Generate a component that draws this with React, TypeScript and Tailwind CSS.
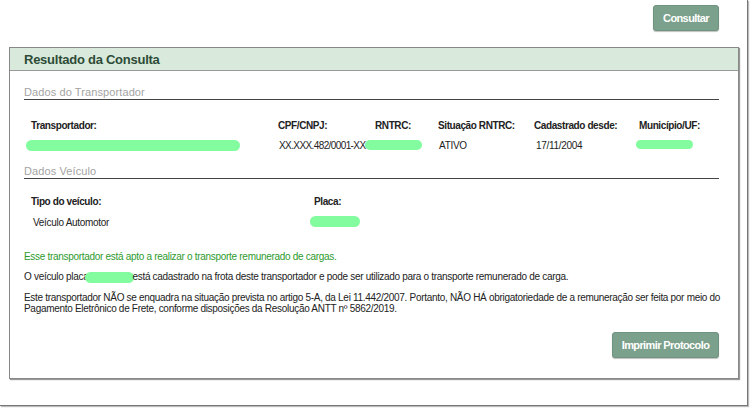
import React from 'react';

const font = { fontFamily: '"Liberation Sans", Arial, sans-serif' };

// marcador verde usado para ocultar dados
function Mark({ className }: { className: string }) {
  return <span className={`block rounded-full bg-[#82fc9e] ${className}`} />;
}

function SectionTitle({ children }: { children: React.ReactNode }) {
  return (
    <div className="border-b border-[#444] pb-[1px] text-[11px] leading-[12px] tracking-[0.1px] text-[#a3a3a3]">
      {children}
    </div>
  );
}

const btn =
  'h-[26px] rounded-[3px] border border-[#6f937f] bg-[#7ba08b] text-[11px] font-bold tracking-[-0.6px] text-white shadow-[0_1px_1px_rgba(0,0,0,0.25)]';

export default function App() {
  return (
    <div className="h-[417px] w-[750px] bg-white text-[#222]" style={font}>
      <div className="flex h-[406px] w-[748px] flex-col border-r border-b border-[#777] shadow-[1px_1px_1px_#bbb]">
        {/* barra de ação */}
        <div className="flex justify-end pt-[5px] pr-[28px]">
          <button className={`${btn} w-[66px]`}>Consultar</button>
        </div>

        {/* painel de resultado */}
        <div className="mt-[16px] ml-[9px] flex h-[332px] w-[730px] flex-col border border-[#888] shadow-[1px_1px_1px_#999]">
          <div className="flex h-[23px] items-center border-b border-[#999] bg-[#d9eadc] pt-[1px] pl-[14px] text-[13px] font-bold tracking-[-0.25px] text-[#2d4b37]">
            Resultado da Consulta
          </div>

          <div className="flex flex-1 flex-col pr-[19px] pl-[14px] text-[10px] tracking-[-0.3px]">
            <div className="mt-[15px]">
              <SectionTitle>Dados do Transportador</SectionTitle>
            </div>

            <div className="mt-[19px] flex leading-[14px] whitespace-nowrap">
              <div className="w-[254px] pl-[7px]">
                <div className="font-bold tracking-[-0.4px]">Transportador:</div>
                <Mark className="mt-[7px] -ml-[5px] h-[11px] w-[214px]" />
              </div>
              <div className="w-[97px]">
                <div className="font-bold tracking-[-0.4px]">CPF/CNPJ:</div>
                <div className="mt-[6px] pl-[1px] tracking-[-0.6px]">XX.XXX.482/0001-XX</div>
              </div>
              <div className="w-[63px]">
                <div className="font-bold tracking-[-0.4px]">RNTRC:</div>
                <Mark className="mt-[7px] -ml-[10px] h-[10px] w-[57px]" />
              </div>
              <div className="w-[96px]">
                <div className="font-bold tracking-[-0.4px]">Situação RNTRC:</div>
                <div className="mt-[6px] pl-[1px]">ATIVO</div>
              </div>
              <div className="w-[105px]">
                <div className="font-bold tracking-[-0.4px]">Cadastrado desde:</div>
                <div className="mt-[6px] pl-[2px]">17/11/2004</div>
              </div>
              <div className="flex-1">
                <div className="font-bold tracking-[-0.4px]">Município/UF:</div>
                <Mark className="mt-[7px] -ml-[3px] h-[9px] w-[57px]" />
              </div>
            </div>

            <div className="mt-[12px]">
              <SectionTitle>Dados Veículo</SectionTitle>
            </div>

            <div className="mt-[16px] flex leading-[14px]">
              <div className="w-[290px] pl-[7px]">
                <div className="font-bold tracking-[-0.4px]">Tipo do veículo:</div>
                <div className="mt-[7px] pl-[2px]">Veículo Automotor</div>
              </div>
              <div>
                <div className="font-bold tracking-[-0.4px]">Placa:</div>
                <Mark className="mt-[7px] -ml-[4px] h-[11px] w-[50px]" />
              </div>
            </div>

            <div className="mt-[21px] leading-[12px] text-[#2e9a2e]">
              Esse transportador está apto a realizar o transporte remunerado de cargas.
            </div>
            <div className="mt-[8px] flex items-center leading-[12px] whitespace-nowrap">
              <span>O veículo placa</span>
              <Mark className="-ml-[3px] h-[11px] w-[49px]" />
              <span className="-ml-[2px]">está cadastrado na frota deste transportador e pode ser utilizado para o transporte remunerado de carga.</span>
            </div>
            <p className="mt-[9px] leading-[11px] whitespace-nowrap">
              Este transportador NÃO se enquadra na situação prevista no artigo 5-A, da Lei 11.442/2007. Portanto, NÃO HÁ obrigatoriedade de a remuneração ser feita por meio do
              <br />
              Pagamento Eletrônico de Frete, conforme disposições da Resolução ANTT nº 5862/2019.
            </p>

            <div className="mt-auto mb-[20px] flex justify-end">
              <button className={`${btn} w-[107px]`}>Imprimir Protocolo</button>
            </div>
          </div>
        </div>
      </div>
    </div>
  );
}
